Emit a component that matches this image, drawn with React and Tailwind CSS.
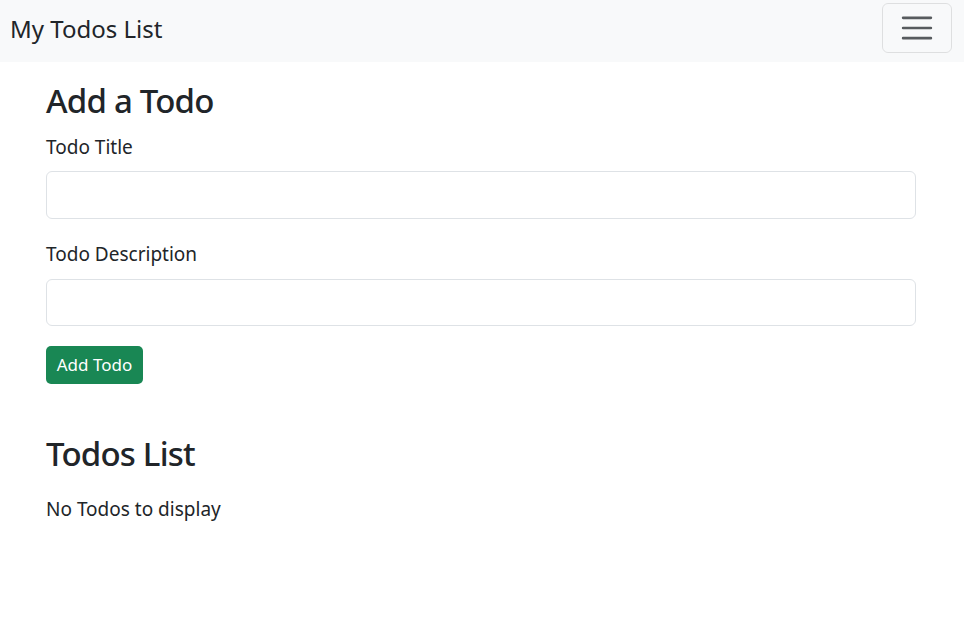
export default function App() {
  return (
    <div className="min-h-[635px] bg-white text-[#212529] font-['Noto_Sans',sans-serif]">
      <nav className="h-[62px] bg-[#f8f9fa] flex items-start justify-between pl-[10px] pr-[12px]">
        <span className="mt-[12px] text-[24px] leading-[34px]">My Todos List</span>
        <button className="mt-[3px] w-[70px] h-[50px] border border-[rgba(0,0,0,0.1)] rounded-[6px] flex items-center justify-center">
          <svg width="38" height="38" viewBox="0 0 30 30">
            <path d="M4 7h22M4 15h22M4 23h22" stroke="rgba(33,37,41,0.75)" strokeWidth="2" strokeLinecap="round" />
          </svg>
        </button>
      </nav>

      <div className="w-[870px] ml-[46px] pt-[18px]">
        <h2 className="text-[33px] leading-[42px] tracking-[-0.8px] font-medium mb-[10px]">Add a Todo</h2>
        <form onSubmit={(e) => e.preventDefault()}>
          <div className="mb-[20px]">
            <label className="block text-[19px] leading-[30px] mb-[9px]">Todo Title</label>
            <input type="text" className="block w-full h-[48px] border border-[#dee2e6] rounded-[6px] px-[15px] text-[19px] outline-none" />
          </div>
          <div className="mb-[20px]">
            <label className="block text-[19px] leading-[30px] mb-[10px]">Todo Description</label>
            <input type="text" className="block w-full h-[47px] border border-[#dee2e6] rounded-[6px] px-[15px] text-[19px] outline-none" />
          </div>
          <button type="submit" className="h-[38px] w-[97px] bg-[#198754] text-white text-[17px] leading-[26px] rounded-[5px]">
            Add Todo
          </button>
        </form>

        <h2 className="mt-[49px] text-[33px] leading-[42px] tracking-[-0.8px] font-medium mb-[19px]">Todos List</h2>
        <p className="text-[19px] leading-[30px]">No Todos to display</p>
      </div>
    </div>
  );
}
